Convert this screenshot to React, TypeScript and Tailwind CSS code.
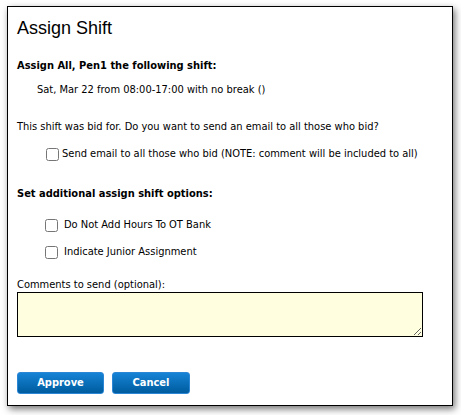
import * as React from "react";

const font = { fontFamily: '"DejaVu Sans Condensed", "DejaVu Sans", sans-serif' };

function CheckRow({ label, className }: { label: string; className?: string }) {
  return (
    <label className={"flex items-center h-4 " + (className ?? "")}>
      <input type="checkbox" className="m-0 w-[13px] h-[13px]" />
      <span>{label}</span>
    </label>
  );
}

export default function App() {
  return (
    <div className="w-[461px] h-[415px] bg-white pt-[6px] pl-[7px]">
      <div
        className="w-[446px] h-[400px] border border-black bg-white shadow-[2px_3px_7px_rgba(0,0,0,0.55)] pl-[9px] text-[11px] leading-4 text-black"
        style={font}
      >
        <h1 className="mt-[10px] text-[18px] leading-[22px] font-['Liberation_Sans',Arial,sans-serif]">
          Assign Shift
        </h1>
        <div className="mt-[19px] font-bold">Assign All, Pen1 the following shift:</div>
        <div className="mt-[8px] pl-[20px]">Sat, Mar 22 from 08:00-17:00 with no break ()</div>
        <div className="mt-[21px]">This shift was bid for. Do you want to send an email to all those who bid?</div>
        <CheckRow
          className="mt-[11px] pl-[29px] gap-[3px]"
          label="Send email to all those who bid (NOTE: comment will be included to all)"
        />
        <div className="mt-[24px] font-bold">Set additional assign shift options:</div>
        <CheckRow className="mt-[15px] pl-[28px] gap-[6px]" label="Do Not Add Hours To OT Bank" />
        <CheckRow className="mt-[11px] pl-[28px] gap-[6px]" label="Indicate Junior Assignment" />
        <div className="mt-[18px] leading-[14px]">Comments to send (optional):</div>
        <textarea className="block w-[406px] h-[45px] border border-black bg-[#ffffe0] outline-none" />
        <div className="mt-[35px] flex gap-[8px]">
          <button className="w-[87px] h-[22px] rounded-[3px] border border-[#2b86d6] bg-gradient-to-b from-[#1683d6] to-[#005c9e] text-white font-bold text-[11px]">
            Approve
          </button>
          <button className="w-[78px] h-[22px] rounded-[3px] border border-[#2b86d6] bg-gradient-to-b from-[#1683d6] to-[#005c9e] text-white font-bold text-[11px]">
            Cancel
          </button>
        </div>
      </div>
    </div>
  );
}
